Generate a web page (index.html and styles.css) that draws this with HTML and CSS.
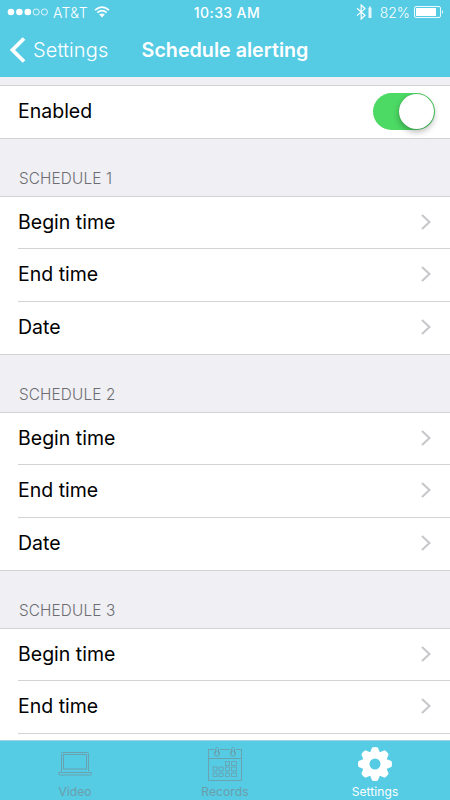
FILE: index.html
```html
<!DOCTYPE html>
<html lang="en">
<head>
<meta charset="utf-8">
<title>Schedule alerting</title>
<link rel="stylesheet" href="styles.css">
</head>
<body>
<div class="screen">
  <header class="top">
    <div class="status">
      <div class="carrier">
        <svg width="41" height="8" viewBox="0 0 41 8"><g fill="#fff"><circle cx="4" cy="4" r="3.3"/><circle cx="12.400" cy="4" r="3.3"/><circle cx="20.800" cy="4" r="3.3"/></g><g fill="none" stroke="#fff" stroke-width=".8"><circle cx="29.200" cy="4" r="3.1"/><circle cx="37.400" cy="4" r="3.1"/></g></svg>
        <span class="network">AT&amp;T</span>
        <svg class="wifi" width="16" height="12" viewBox="0 0 16 12"><g fill="none" stroke="#fff" stroke-width="1.6"><path d="M1 4.2Q8-2 15 4.2M3.3 6.7q4.7-4 9.4 0"/></g><path d="M5.2 8.5q2.8-2.2 5.6 0L8 11.5z" fill="#fff"/></svg>
      </div>
      <span class="clock">10:33 AM</span>
      <div class="power">
        <svg width="17" height="16" viewBox="0 0 17 16"><path d="M1 4.2l8 7L5.2 15V1L9 4.600l-8 7" fill="none" stroke="#fff" stroke-width="1.2"/><path d="M13.2 2.500h1.6v1.300h.7V14h-3V3.800h.7z" fill="#fff" opacity=".85"/></svg>
        <span class="percent">82%</span>
        <svg class="battery" width="30" height="12" viewBox="0 0 30 12"><rect x=".5" y=".5" width="26" height="11" rx="1.5" fill="none" stroke="#fff" stroke-width=".9"/><path d="M2 2h20v8H2z" fill="#fff"/><path d="M28 4q2 2 0 4z" fill="#fff"/></svg>
      </div>
    </div>
    <nav class="nav">
      <a class="back"><svg width="16" height="26" viewBox="0 0 16 26"><path d="M14 1.5L2.5 13 14 24.5" fill="none" stroke="#fff" stroke-width="3.8"/></svg><span>Settings</span></a>
      <h1>Schedule alerting</h1>
    </nav>
  </header>
  <main class="content">
    <section class="group enabled">
      <div class="row"><span class="label">Enabled</span><span class="toggle"><span class="knob"></span></span></div>
    </section>
    <h2>SCHEDULE 1</h2>
    <section class="group">
      <div class="row"><span class="label">Begin time</span><svg class="chevron" viewBox="0 0 12 18"><path d="M2 2l7.5 7L2 16"/></svg></div>
      <div class="row"><span class="label">End time</span><svg class="chevron" viewBox="0 0 12 18"><path d="M2 2l7.5 7L2 16"/></svg></div>
      <div class="row"><span class="label">Date</span><svg class="chevron" viewBox="0 0 12 18"><path d="M2 2l7.5 7L2 16"/></svg></div>
    </section>
    <h2>SCHEDULE 2</h2>
    <section class="group">
      <div class="row"><span class="label">Begin time</span><svg class="chevron" viewBox="0 0 12 18"><path d="M2 2l7.5 7L2 16"/></svg></div>
      <div class="row"><span class="label">End time</span><svg class="chevron" viewBox="0 0 12 18"><path d="M2 2l7.5 7L2 16"/></svg></div>
      <div class="row"><span class="label">Date</span><svg class="chevron" viewBox="0 0 12 18"><path d="M2 2l7.5 7L2 16"/></svg></div>
    </section>
    <h2>SCHEDULE 3</h2>
    <section class="group">
      <div class="row"><span class="label">Begin time</span><svg class="chevron" viewBox="0 0 12 18"><path d="M2 2l7.5 7L2 16"/></svg></div>
      <div class="row"><span class="label">End time</span><svg class="chevron" viewBox="0 0 12 18"><path d="M2 2l7.5 7L2 16"/></svg></div>
      <div class="row"></div>
    </section>
  </main>
  <footer class="tabs">
    <a class="tab">
      <svg width="36" height="40" viewBox="0 0 36 40"><g fill="none" stroke="#6d9da9" stroke-width=".9"><path d="M4.500 29.500v-18q0-1 1-1h25q1 0 1 1v18"/><rect x="6.500" y="12.500" width="23" height="14.500"/><path d="M1.500 30.500h33M1.500 30.500v1q0 1.500 2 1.500h29q2 0 2-1.500v-1"/></g></svg>
      <span>Video</span>
    </a>
    <a class="tab">
      <svg width="36" height="40" viewBox="0 0 36 40"><g fill="none" stroke="#6d9da9" stroke-width=".9"><path d="M7 7.500H1.500v31h33v-31H29M13 7.500h10M1.500 16.500h33"/><path d="M8.500 12V6.500q1.500-2.500 3 0V12M24.500 12V6.500q1.500-2.500 3 0V12"/><circle cx="10" cy="11.500" r="2.700"/><circle cx="26" cy="11.500" r="2.700"/><path d="M18.500 19.500h4v4h-4zM24.500 19.500h5v4h-5zM6 25h4v4H6zM12 25h4v4h-4zM18.500 25h4v4h-4zM24.500 25h5v4h-5zM6 31h4v3.500H6zM12 31h4v3.500h-4zM18.500 31h4v3.500h-4zM24.500 31h5v3.500h-5z" stroke-width=".8"/></g></svg>
      <span>Records</span>
    </a>
    <a class="tab active">
      <svg width="36" height="40" viewBox="-18 -22 36 40"><defs><path id="tooth" d="M-5.500-10L-2.900-16.400Q0-17.600 2.900-16.400L5.500-10z"/></defs><g fill="#fff"><use href="#tooth"/><use href="#tooth" transform="rotate(45)"/><use href="#tooth" transform="rotate(90)"/><use href="#tooth" transform="rotate(135)"/><use href="#tooth" transform="rotate(180)"/><use href="#tooth" transform="rotate(225)"/><use href="#tooth" transform="rotate(270)"/><use href="#tooth" transform="rotate(315)"/></g><circle r="9.200" fill="none" stroke="#fff" stroke-width="7.400"/></svg>
      <span>Settings</span>
    </a>
  </footer>
</div>
</body>
</html>
```
FILE: styles.css
```css
* { box-sizing: border-box; }
body { margin: 0; font-family: Inter, "Liberation Sans", sans-serif; color: #000; }
svg { display: block; flex: none; }
.screen { width: 450px; height: 800px; overflow: hidden; display: flex; flex-direction: column; background: #efeff4; }
.top { height: 77px; flex: none; background: #55cbe4; color: #fff; }
.status { height: 24px; display: grid; grid-template-columns: 150px 1fr 150px; align-items: center; font-size: 14px; }
.carrier { display: flex; align-items: center; padding-left: 7px; }
.network { margin-left: 5px; font-weight: 300; letter-spacing: .35px; }
.wifi { margin-left: 6px; }
.clock { text-align: center; font-weight: 500; padding-left: 4px; letter-spacing: .4px; }
.power { display: flex; align-items: center; justify-content: flex-end; padding-right: 6px; }
.percent { margin-left: 7px; font-weight: 300; }
.battery { margin-left: 4px; }
.nav { height: 52px; display: grid; grid-template-columns: 130px 190px 130px; align-items: center; }
.back { display: flex; align-items: center; gap: 7px; padding-left: 10px; font-size: 20px; font-weight: 300; letter-spacing: .1px; }
.nav h1 { margin: 0; text-align: center; font-size: 19.7px; font-weight: 600; white-space: nowrap; }
.content { flex: 1; min-height: 0; overflow: hidden; padding-top: 8px; }
.group { background: #fff; border-top: 1px solid #d3d2d8; }
.row { height: 53px; display: flex; align-items: center; justify-content: space-between; margin-left: 18px; padding-right: 18px; border-bottom: 1px solid #d3d2d7; }
.row:first-child { height: 52px; }
.row:last-child { margin-left: 0; padding-left: 18px; }
.enabled .row:first-child { height: 53px; padding-right: 15px; padding-bottom: 2px; }
.enabled .label { top: 0; }
.label { font-size: 19.5px; line-height: 24px; position: relative; top: -1px; }
.content h2 { height: 57px; margin: 0; padding: 31px 0 0 19px; font-size: 15.3px; line-height: 18px; font-weight: 350; letter-spacing: .15px; color: #6d6d72; }
.chevron { width: 12px; height: 18px; margin-bottom: 2px; fill: none; stroke: #c7c7cc; stroke-width: 2.1; }
.toggle { width: 62px; height: 37px; padding: 1px; border-radius: 19px; background: #4cd964; display: flex; justify-content: flex-end; }
.knob { width: 35px; height: 35px; border-radius: 50%; background: #fff; box-shadow: 0 3px 6px rgba(0,0,0,.28), 0 0 1px rgba(0,0,0,.3); }
.tabs { height: 60px; flex: none; display: grid; grid-template-columns: repeat(3, 1fr); background: #55cbe4; border-top: 1px solid #9bd3df; }
.tab { display: flex; flex-direction: column; align-items: center; padding-top: 1px; font-size: 12px; line-height: 14px; letter-spacing: .1px; color: #6d9da9; }
.tab span { margin-top: 3px; }
.active { color: #fff; }
```
